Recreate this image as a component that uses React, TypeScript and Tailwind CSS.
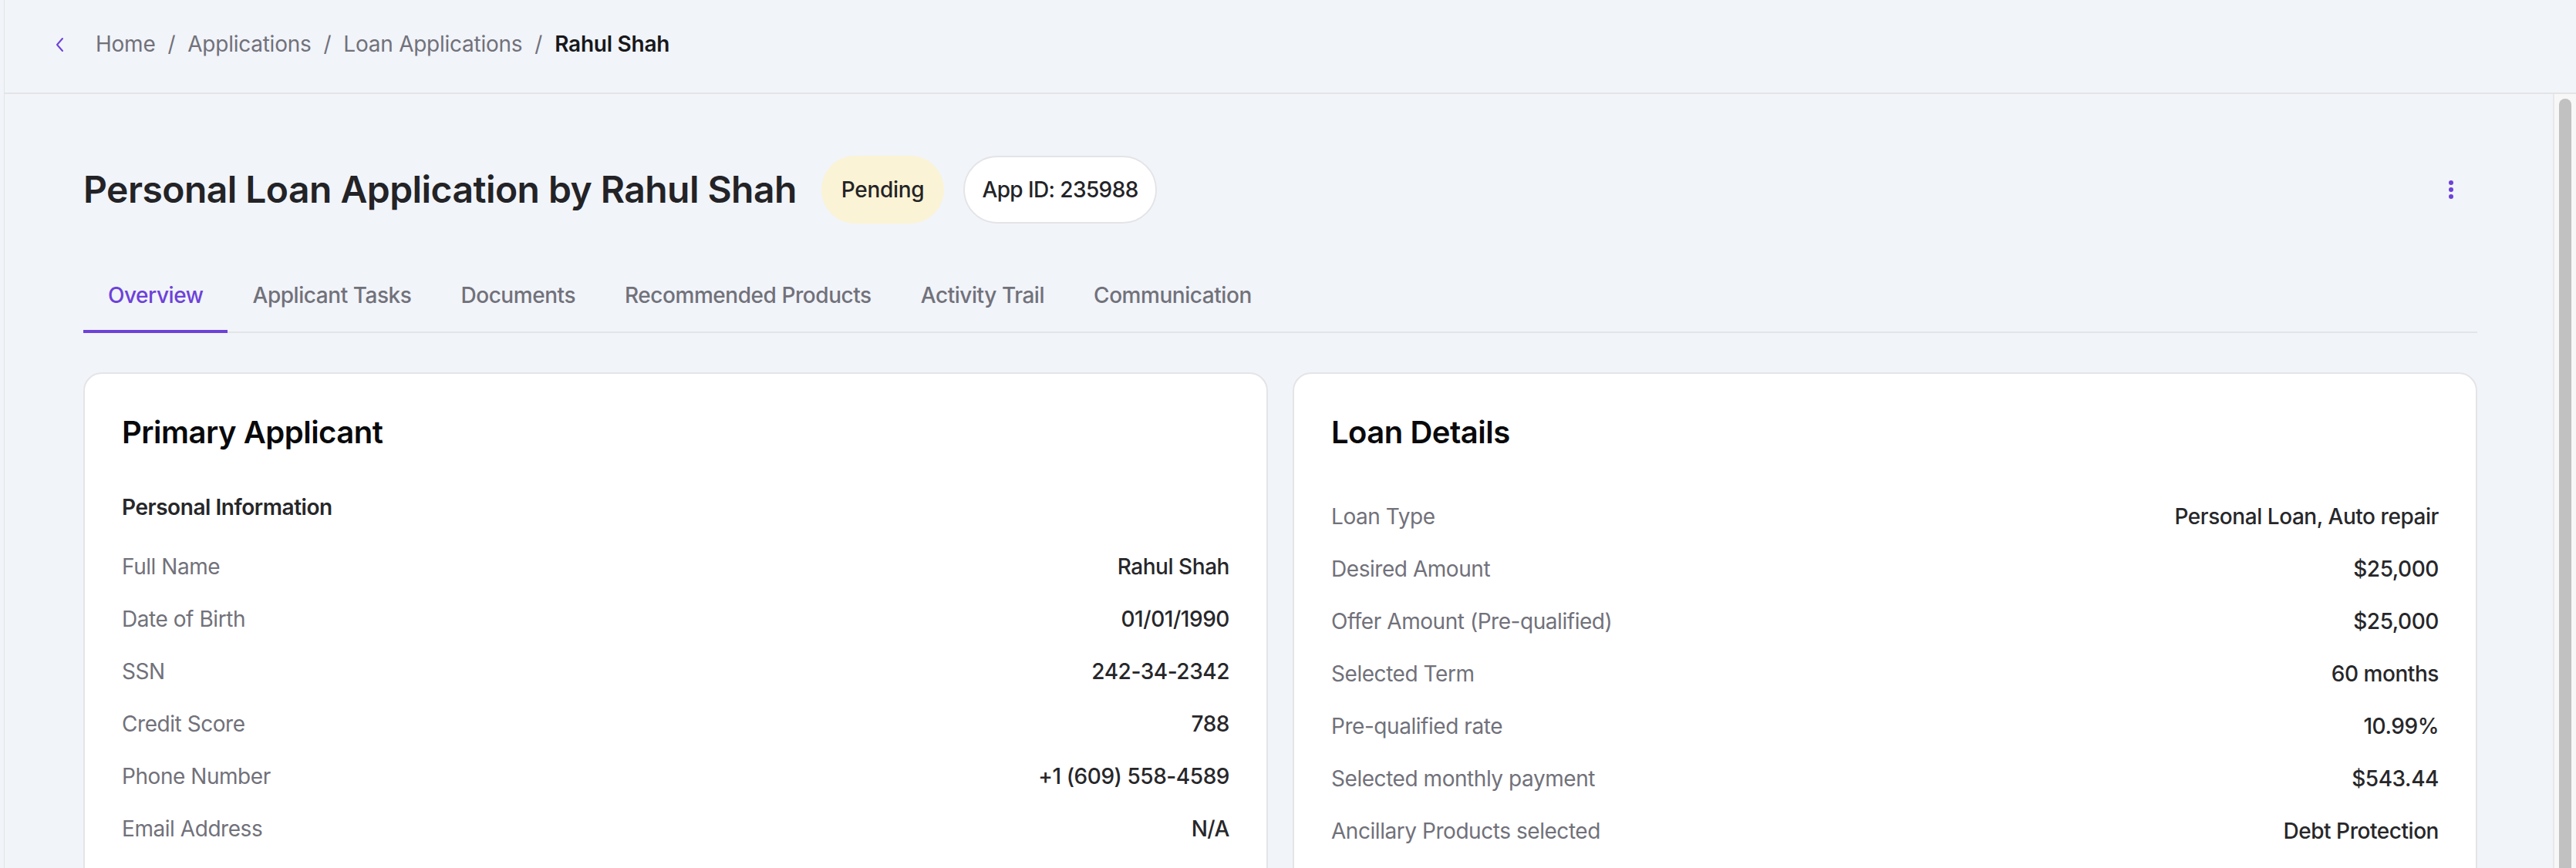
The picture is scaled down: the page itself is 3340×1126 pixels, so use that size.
import React from "react";

const leftRows: [string, string][] = [
  ["Full Name", "Rahul Shah"],
  ["Date of Birth", "01/01/1990"],
  ["SSN", "242-34-2342"],
  ["Credit Score", "788"],
  ["Phone Number", "+1 (609) 558-4589"],
  ["Email Address", "N/A"],
];

const rightRows: [string, string][] = [
  ["Loan Type", "Personal Loan, Auto repair"],
  ["Desired Amount", "$25,000"],
  ["Offer Amount (Pre-qualified)", "$25,000"],
  ["Selected Term", "60 months"],
  ["Pre-qualified rate", "10.99%"],
  ["Selected monthly payment", "$543.44"],
  ["Ancillary Products selected", "Debt Protection"],
];

const tabs = [
  "Overview",
  "Applicant Tasks",
  "Documents",
  "Recommended Products",
  "Activity Trail",
  "Communication",
];

function Row({ label, value }: { label: string; value: string }) {
  return (
    <div className="flex items-center justify-between text-[28px] leading-[40px] tracking-[-0.45px]">
      <span className="text-[#71717a]">{label}</span>
      <span className="font-medium text-[#27272a]">{value}</span>
    </div>
  );
}

export default function App() {
  return (
    <div className="flex h-[1126px] w-[3340px] overflow-hidden bg-[#f1f4f9] pl-[5px] font-['Inter',sans-serif]">
      <div className="flex min-w-0 flex-1 flex-col border-l border-[#e4e4e7]">
        {/* Header / breadcrumb */}
        <div className="flex h-[122px] shrink-0 items-center border-b-2 border-[#e4e4e7] pb-[6px] pl-[65px]">
          <svg width="12" height="20" viewBox="0 0 12 20" fill="none" className="mt-[2px]">
            <path d="M10 2 L3 10 L10 18" stroke="#6d41d9" strokeWidth="2" strokeLinecap="round" strokeLinejoin="round" />
          </svg>
          <nav className="ml-[41px] flex items-center gap-[16px] text-[28px] leading-[40px] tracking-[-0.25px] text-[#71717a]">
            <span>Home</span>
            <span>/</span>
            <span>Applications</span>
            <span>/</span>
            <span>Loan Applications</span>
            <span>/</span>
            <span className="font-semibold text-[#18181b]">Rahul Shah</span>
          </nav>
        </div>

        <div className="flex min-h-0 flex-1">
          {/* Content */}
          <div className="min-w-0 flex-1 pl-[102px] pr-[98px] pt-[80px]">
            <div className="flex h-[88px] items-center justify-between">
              <div className="flex items-center">
                <h1 className="text-[48px] font-semibold leading-[64px] tracking-[-0.55px] text-[#232327]">
                  Personal Loan Application by Rahul Shah
                </h1>
                <span className="ml-[32px] flex h-[88px] items-center rounded-full bg-[#fbf3d5] px-[26px] text-[28px] font-medium tracking-[-0.3px] text-[#232327]">
                  Pending
                </span>
                <span className="ml-[25px] flex h-[88px] items-center rounded-full border-2 border-[#e4e4e7] bg-white px-[22px] text-[28px] font-medium tracking-[-0.6px] text-[#232327]">
                  App ID: 235988
                </span>
              </div>
              <svg width="20" height="30" viewBox="0 0 20 30" className="mr-[24px]">
                <circle cx="10" cy="6" r="3" fill="#6d41d9" />
                <circle cx="10" cy="15" r="3" fill="#6d41d9" />
                <circle cx="10" cy="24" r="3" fill="#6d41d9" />
              </svg>
            </div>

            {/* Tabs */}
            <div className="mt-[73px] flex border-b-2 border-[#e4e4e7]">
              {tabs.map((t, i) => (
                <div
                  key={t}
                  className={
                    i === 0
                      ? "-mb-[2px] border-b-4 border-[#6d41d9] px-[32px] pb-[25px] text-[28px] font-medium leading-[40px] tracking-[-0.45px] text-[#6d41d9]"
                      : "-mb-[2px] border-b-4 border-transparent px-[32px] pb-[25px] text-[28px] font-medium leading-[40px] tracking-[-0.45px] text-[#71717a]"
                  }
                >
                  {t}
                </div>
              ))}
            </div>

            {/* Cards */}
            <div className="mt-[51px] grid grid-cols-2 gap-[32px]">
              <div className="h-[900px] rounded-[24px] border-2 border-[#e4e4e7] bg-white p-[48px]">
                <h2 className="text-[40px] font-semibold leading-[56px] tracking-[-0.5px] text-[#09090b]">Primary Applicant</h2>
                <h3 className="mt-[49px] text-[28px] font-semibold leading-[40px] tracking-[-0.45px] text-[#27272a]">
                  Personal Information
                </h3>
                <div className="mt-[37px] flex flex-col gap-[28px]">
                  {leftRows.map(([l, v]) => (
                    <Row key={l} label={l} value={v} />
                  ))}
                </div>
              </div>
              <div className="h-[900px] rounded-[24px] border-2 border-[#e4e4e7] bg-white p-[48px]">
                <h2 className="text-[40px] font-semibold leading-[56px] tracking-[-0.5px] text-[#09090b]">Loan Details</h2>
                <div className="mt-[61px] flex flex-col gap-[28px]">
                  {rightRows.map(([l, v]) => (
                    <Row key={l} label={l} value={v} />
                  ))}
                </div>
              </div>
            </div>
          </div>

          {/* Scrollbar */}
          <div className="flex w-[30px] shrink-0 justify-center border-l-2 border-[#e8e8ea] bg-[#f7f7f7] pt-[6px]">
            <div className="h-[1100px] w-[16px] rounded-full bg-[#c1c1c1]" />
          </div>
        </div>
      </div>
    </div>
  );
}
